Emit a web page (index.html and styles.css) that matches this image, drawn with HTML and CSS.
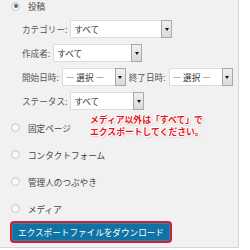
FILE: index.html
```html
<!DOCTYPE html>
<html lang="ja">
<head>
<meta charset="utf-8">
<link rel="stylesheet" href="styles.css">
</head>
<body>
<div class="panel">
  <div class="radio-row first"><span class="radio checked"></span><span class="rtext">投稿</span></div>
  <div class="filters">
    <div class="field">
      <span class="lbl">カテゴリー:</span>
      <div class="select w-cat"><span class="val">すべて</span><span class="arrow"></span></div>
    </div>
    <div class="field">
      <span class="lbl">作成者:</span>
      <div class="select w-author"><span class="val">すべて</span><span class="arrow"></span></div>
    </div>
    <div class="field">
      <span class="lbl">開始日時:</span>
      <div class="select w-date"><span class="val">— 選択 —</span><span class="arrow"></span></div>
      <span class="lbl second">終了日時:</span>
      <div class="select w-date"><span class="val">— 選択 —</span><span class="arrow"></span></div>
    </div>
    <div class="field">
      <span class="lbl">ステータス:</span>
      <div class="select w-status"><span class="val">すべて</span><span class="arrow"></span></div>
    </div>
  </div>
  <div class="radios">
    <div class="radio-row"><span class="radio"></span><span class="rtext">固定ページ</span></div>
    <div class="radio-row"><span class="radio"></span><span class="rtext">コンタクトフォーム</span></div>
    <div class="radio-row"><span class="radio"></span><span class="rtext">管理人のつぶやき</span></div>
    <div class="radio-row"><span class="radio"></span><span class="rtext">メディア</span></div>
  </div>
  <button class="btn">エクスポートファイルをダウンロード</button>
  <p class="note">メディア以外は「すべて」で<br>エクスポートしてください。</p>
</div>
</body>
</html>
```

FILE: styles.css
```css
html, body {
  margin: 0;
  padding: 0;
  background: #ffffff;
}

body {
  font-family: "Noto Sans CJK JP", "Noto Sans", sans-serif;
  font-size: 8.6px;
  color: #444;
}

.panel {
  position: relative;
  width: 238px;
  height: 247px;
  background: #f1f1f1;
  border-right: 1px solid #d6d6d6;
  border-bottom: 1px solid #d6d6d6;
  box-sizing: content-box;
  padding-left: 0;
  display: flex;
  flex-direction: column;
}

.radio-row {
  display: flex;
  align-items: center;
  height: 27px;
  padding-left: 11px;
}

.radio-row.first {
  height: 12px;
  margin-bottom: 5px;
}

.radio {
  width: 7px;
  height: 7px;
  border-radius: 50%;
  border: 1px solid #c9c9c9;
  background: #fafafa;
  box-shadow: inset 0 1px 1px rgba(0,0,0,0.08);
  margin-right: 8px;
  position: relative;
  flex: none;
}

.radio.checked::after {
  content: "";
  position: absolute;
  left: 1.5px;
  top: 1.5px;
  width: 4px;
  height: 4px;
  border-radius: 50%;
  background: #3c6f98;
}

.rtext {
  color: #444;
}

.filters {
  display: flex;
  flex-direction: column;
  padding-left: 22px;
}

.field {
  display: flex;
  align-items: center;
  height: 24px;
}

.lbl {
  margin-right: 3px;
  color: #555;
}

.lbl.second {
  margin-left: 3px;
}

.select {
  display: flex;
  height: 18px;
  box-sizing: border-box;
  border: 1px solid #dcdcdc;
  background: #ffffff;
}

.w-cat { width: 102px; }
.w-author { width: 89px; }
.w-date { width: 64px; }
.w-status { width: 74px; }

.val {
  flex: 1;
  padding-left: 3px;
  line-height: 16px;
  color: #333;
  white-space: nowrap;
  overflow: hidden;
}

.arrow {
  width: 11px;
  flex: none;
  box-sizing: border-box;
  border: 1px solid #a9a9a9;
  margin: -1px -1px -1px 0;
  background: linear-gradient(#f0f0f0, #dadada);
  display: flex;
  align-items: center;
  justify-content: center;
}

.arrow::after {
  content: "";
  width: 0;
  height: 0;
  border-left: 2.5px solid transparent;
  border-right: 2.5px solid transparent;
  border-top: 3px solid #111;
}

.radios {
  display: flex;
  flex-direction: column;
  margin-top: 1px;
}

.btn {
  align-self: flex-start;
  margin-left: 10px;
  margin-top: -1px;
  width: 162px;
  height: 22px;
  box-sizing: border-box;
  border: 2px solid #d4202c;
  border-radius: 4px;
  background: #0f73a5;
  box-shadow: inset 0 0 0 1px #1e88b8;
  color: #fff;
  font-family: "Noto Sans CJK JP", "Noto Sans", sans-serif;
  font-size: 8.6px;
  padding: 0;
  text-align: center;
}

.note {
  position: absolute;
  left: 90px;
  top: 114px;
  margin: 0;
  font-size: 8.8px;
  line-height: 12px;
  font-weight: bold;
  color: #e5161f;
  text-shadow: 1px 0 #fff, -1px 0 #fff, 0 1px #fff, 0 -1px #fff, 1px 1px #fff, -1px -1px #fff, 1px 1px 2px rgba(200,0,0,0.5);
}
```
